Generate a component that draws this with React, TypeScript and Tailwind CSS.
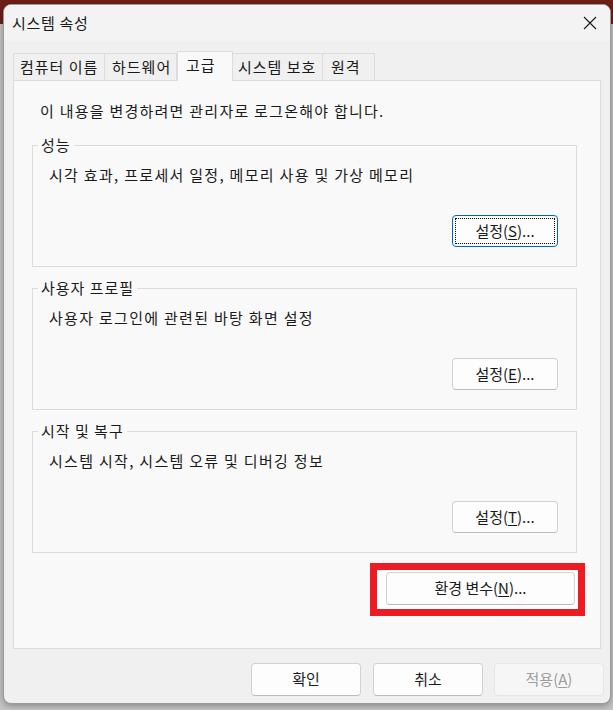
import type { ReactNode } from 'react';

const font = "font-['Malgun_Gothic','Noto_Sans_CJK_KR','Noto_Sans',sans-serif]";

function Mn({ children }: { children: ReactNode }) {
  return <span className="underline underline-offset-[2px] decoration-[1px]">{children}</span>;
}

function WinButton({
  children,
  className = '',
  focused = false,
  disabled = false,
}: {
  children: ReactNode;
  className?: string;
  focused?: boolean;
  disabled?: boolean;
}) {
  if (focused) {
    return (
      <button
        type="button"
        className={`relative flex items-center justify-center rounded-[4px] border border-[#0067c0] bg-[#fdfdfd] text-[15px] text-[#1a1a1a] ${className}`}
      >
        <span className="absolute inset-[2px] border border-dotted border-black" />
        <span>{children}</span>
      </button>
    );
  }
  return (
    <button
      type="button"
      className={`flex items-center justify-center rounded-[4px] border text-[15px] ${
        disabled
          ? 'border-[#e6e6e6] bg-[#f6f6f6] text-[#9d9d9d]'
          : 'border-[#d2d2d2] border-b-[#bcbcbc] bg-[#fdfdfd] text-[#1a1a1a]'
      } ${className}`}
    >
      {children}
    </button>
  );
}

function GroupBox({ title, desc, button }: { title: string; desc: string; button: ReactNode }) {
  return (
    <div className="relative h-[122px] border border-[#dcdcdc]">
      <span className="absolute left-[5px] top-[-12px] bg-[#f9f9f9] px-[3px] text-[15px] leading-[22px] tracking-[1px] text-[#1a1a1a]">
        {title}
      </span>
      <div className="pl-[16px] pt-[18px] text-[15px] leading-[22px] tracking-[1.3px] text-[#1a1a1a]">{desc}</div>
      <div className="mt-[29px] flex justify-end pr-[18px]">{button}</div>
    </div>
  );
}

const tabs = [
  { label: '컴퓨터 이름', cls: 'w-[92px] pl-[6px]' },
  { label: '하드웨어', cls: 'w-[72px] pl-[7px]' },
  { label: '고급', cls: 'w-[56px] pl-[8px]', sel: true },
  { label: '시스템 보호', cls: 'w-[90px] pl-[5px]' },
  { label: '원격', cls: 'w-[52px] pl-[8px]' },
];

export default function App() {
  return (
    <div
      className={`${font} h-[710px] w-[613px] overflow-hidden bg-[linear-gradient(to_bottom,#6e1e18_0px,#6e1e18_24px,#c4c4c4_24px)] pl-[3px] pr-[2px] pt-[4px]`}
    >
      <div className="flex h-[700px] flex-col overflow-hidden rounded-[8px] border border-[#9a9a9a] bg-[#f0f0f0] shadow-[0_2px_6px_rgba(0,0,0,0.3)]">
        {/* title bar */}
        <div className="flex h-[36px] shrink-0 items-center justify-between bg-[#f3f3f3] pl-[8px] pr-[10px]">
          <span className="text-[15px] tracking-[0.7px] text-[#1a1a1a]">시스템 속성</span>
          <svg width="16" height="16" viewBox="0 0 16 16" className="mr-[2px]">
            <path d="M2 2 L14 14 M14 2 L2 14" stroke="#1a1a1a" strokeWidth="1.1" />
          </svg>
        </div>

        <div className="flex flex-1 flex-col px-[9px]">
          {/* tabs */}
          <div className="mt-[10px] flex h-[29px] items-end">
            {tabs.map((t) => (
              <div
                key={t.label}
                className={
                  t.sel
                    ? `relative z-10 -mb-px flex h-[30px] shrink-0 items-center border border-b-0 border-[#dcdcdc] bg-[#f9f9f9] pb-[2px] text-[15px] tracking-[1px] text-[#1a1a1a] ${t.cls}`
                    : `flex h-[27px] shrink-0 items-center border border-b-0 border-l-0 border-[#dcdcdc] bg-[#f0f0f0] text-[15px] tracking-[1px] text-[#1a1a1a] first:border-l ${t.cls}`
                }
              >
                {t.label}
              </div>
            ))}
          </div>

          {/* panel */}
          <div className="h-[569px] border border-[#dcdcdc] bg-[#f9f9f9] pl-[18px] pr-[23px]">
            <div className="pl-[8px] pt-[19px] text-[15px] leading-[22px] tracking-[1.25px] text-[#1a1a1a]">
              이 내용을 변경하려면 관리자로 로그온해야 합니다.
            </div>
            <div className="mt-[23px] flex flex-col gap-[21px]">
              <GroupBox
                title="성능"
                desc="시각 효과, 프로세서 일정, 메모리 사용 및 가상 메모리"
                button={
                  <WinButton focused className="h-[32px] w-[106px]">
                    설정(<Mn>S</Mn>)...
                  </WinButton>
                }
              />
              <GroupBox
                title="사용자 프로필"
                desc="사용자 로그인에 관련된 바탕 화면 설정"
                button={
                  <WinButton className="h-[32px] w-[106px]">
                    설정(<Mn>E</Mn>)...
                  </WinButton>
                }
              />
              <GroupBox
                title="시작 및 복구"
                desc="시스템 시작, 시스템 오류 및 디버깅 정보"
                button={
                  <WinButton className="h-[32px] w-[106px]">
                    설정(<Mn>T</Mn>)...
                  </WinButton>
                }
              />
            </div>
            <div className="mt-[19px] flex justify-end pr-[2px]">
              <div className="relative">
                <div className="absolute bottom-[-11px] left-[-16px] right-[-10px] top-[-9px] border-[7px] border-[#ed1c24] bg-white" />
                <WinButton className="relative h-[33px] w-[189px]">
                  환경 변수(<Mn>N</Mn>)...
                </WinButton>
              </div>
            </div>
          </div>

          {/* footer */}
          <div className="mt-[14px] flex justify-end" style={{ marginRight: -3 }}>
            <WinButton className="h-[33px] w-[110px]">확인</WinButton>
            <WinButton className="ml-[12px] h-[33px] w-[110px]">취소</WinButton>
            <WinButton disabled className="ml-[11px] h-[33px] w-[110px]">
              적용(<Mn>A</Mn>)
            </WinButton>
          </div>
        </div>
      </div>
    </div>
  );
}
